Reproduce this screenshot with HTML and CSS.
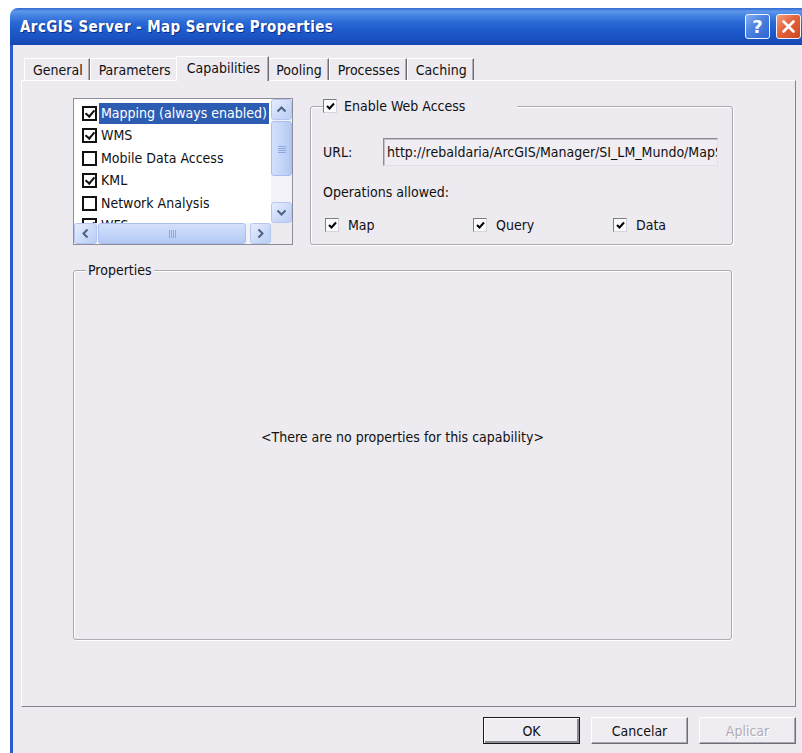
FILE: index.html
```html
<!DOCTYPE html>
<html lang="en">
<head>
<meta charset="utf-8">
<title>ArcGIS Server - Map Service Properties</title>
<link rel="stylesheet" href="styles.css">
</head>
<body>
<div class="window">
  <header class="titlebar">
    <span class="title">ArcGIS Server - Map Service Properties</span>
    <div class="caption-buttons">
      <button class="cap-btn help" type="button">?</button>
      <button class="cap-btn close" type="button">
        <svg width="23" height="23" viewBox="0 0 23 23"><path d="M6.5 6.5 L16.5 16.5 M16.5 6.5 L6.5 16.5" stroke="#fff" stroke-width="2.6" stroke-linecap="round" fill="none"/></svg>
      </button>
    </div>
  </header>

  <div class="client">
    <nav class="tabs">
      <div class="tab">General</div>
      <div class="tab">Parameters</div>
      <div class="tab active">Capabilities</div>
      <div class="tab">Pooling</div>
      <div class="tab">Processes</div>
      <div class="tab">Caching</div>
    </nav>

    <section class="panel">
      <div class="top-row">
        <div class="listbox">
          <ul class="items">
            <li class="item"><span class="cb checked"></span><span class="label selected">Mapping (always enabled)</span></li>
            <li class="item"><span class="cb checked"></span><span class="label">WMS</span></li>
            <li class="item"><span class="cb"></span><span class="label">Mobile Data Access</span></li>
            <li class="item"><span class="cb checked"></span><span class="label">KML</span></li>
            <li class="item"><span class="cb"></span><span class="label">Network Analysis</span></li>
            <li class="item"><span class="cb checked"></span><span class="label">WFS</span></li>
          </ul>
          <div class="vscroll">
            <span class="sb-btn">
              <svg width="11" height="7" viewBox="0 0 11 7"><path d="M1.5 5.5 L5.5 1.5 L9.5 5.5" stroke="#4D6185" stroke-width="2" fill="none"/></svg>
            </span>
            <span class="thumb v">
              <svg width="8" height="8" viewBox="0 0 8 8"><path d="M0 1.5H8M0 3.5H8M0 5.5H8M0 7.5H8" stroke="#8FAAE0" stroke-width="1"/></svg>
            </span>
            <span class="track"></span>
            <span class="sb-btn">
              <svg width="11" height="7" viewBox="0 0 11 7"><path d="M1.5 1.5 L5.5 5.5 L9.5 1.5" stroke="#4D6185" stroke-width="2" fill="none"/></svg>
            </span>
          </div>
          <div class="hscroll">
            <span class="sb-btn">
              <svg width="7" height="11" viewBox="0 0 7 11"><path d="M5.5 1.5 L1.5 5.5 L5.5 9.5" stroke="#4D6185" stroke-width="2" fill="none"/></svg>
            </span>
            <span class="thumb h">
              <svg width="8" height="8" viewBox="0 0 8 8"><path d="M1.5 0V8M3.5 0V8M5.5 0V8M7.5 0V8" stroke="#8FAAE0" stroke-width="1"/></svg>
            </span>
            <span class="track"></span>
            <span class="sb-btn">
              <svg width="7" height="11" viewBox="0 0 7 11"><path d="M1.5 1.5 L5.5 5.5 L1.5 9.5" stroke="#4D6185" stroke-width="2" fill="none"/></svg>
            </span>
          </div>
          <div class="corner"></div>
        </div>

        <fieldset class="group web">
          <legend class="caption web-caption">
            <span class="xcb"><svg width="11" height="11" viewBox="0 0 11 11"><path d="M2 5 L4.5 7.5 L9 2.5" stroke="#000" stroke-width="2" fill="none"/></svg></span>
            Enable Web Access
          </legend>
          <div class="url-row">
            <span class="url-label">URL:</span>
            <div class="url-box">http://rebaldaria/ArcGIS/Manager/SI_LM_Mundo/MapServer</div>
          </div>
          <div class="ops-label">Operations allowed:</div>
          <div class="ops">
            <label class="op"><span class="xcb"><svg width="11" height="11" viewBox="0 0 11 11"><path d="M2 5 L4.5 7.5 L9 2.5" stroke="#000" stroke-width="2" fill="none"/></svg></span>Map</label>
            <label class="op"><span class="xcb"><svg width="11" height="11" viewBox="0 0 11 11"><path d="M2 5 L4.5 7.5 L9 2.5" stroke="#000" stroke-width="2" fill="none"/></svg></span>Query</label>
            <label class="op"><span class="xcb"><svg width="11" height="11" viewBox="0 0 11 11"><path d="M2 5 L4.5 7.5 L9 2.5" stroke="#000" stroke-width="2" fill="none"/></svg></span>Data</label>
          </div>
        </fieldset>
      </div>

      <fieldset class="group props">
        <legend class="caption">Properties</legend>
        <p class="empty">&lt;There are no properties for this capability&gt;</p>
      </fieldset>
    </section>

    <div class="actions">
      <button class="btn default" type="button">OK</button>
      <button class="btn" type="button">Cancelar</button>
      <button class="btn" type="button" disabled>Aplicar</button>
    </div>
  </div>
</div>
</body>
</html>
```

FILE: styles.css
```css
* { box-sizing: border-box; }

html, body {
  margin: 0;
  padding: 0;
}

body {
  width: 802px;
  height: 753px;
  overflow: hidden;
  background: #fff;
  font-family: "DejaVu Sans Condensed", "DejaVu Sans", sans-serif;
  font-size: 14px;
  color: #111;
}

/* ---- window frame ---- */
.window {
  margin: 8px 0 0 10px;
  width: 800px;
  border-radius: 8px 8px 0 0;
  overflow: hidden;
}

.titlebar {
  height: 37px;
  display: flex;
  align-items: center;
  justify-content: space-between;
  padding: 0 9px 0 10px;
  background: linear-gradient(to bottom,
    #2f68d2 0%, #5f97ea 9%, #4584e2 20%, #2b6ad6 38%,
    #1f5bcb 60%, #1a52c2 82%, #1646b0 100%);
}

.title {
  color: #fff;
  font-weight: bold;
  font-size: 15px;
  letter-spacing: 0.4px;
  text-shadow: 1px 1px 0 #0f2f86;
}

.caption-buttons {
  display: flex;
  gap: 6px;
}

.cap-btn {
  width: 25px;
  height: 25px;
  padding: 0;
  border: 1px solid #f2f4fb;
  border-radius: 3px;
  display: grid;
  place-items: center;
  color: #fff;
}

.cap-btn.help {
  background: linear-gradient(135deg, #86aef0 0%, #4a82e0 45%, #2e63d0 100%);
  font-family: "DejaVu Sans", sans-serif;
  font-weight: bold;
  font-size: 18px;
  line-height: 1;
}

.cap-btn.close {
  background: linear-gradient(135deg, #f4a07c 0%, #e4623d 45%, #cd4520 100%);
}

.client {
  height: 708px;
  background: #edeaf0;
  border-left: 3px solid #2a5bd0;
  border-right: 3px solid #2a5bd0;
  padding: 11px 11px 0 8px;
}

/* ---- tabs ---- */
.tabs {
  display: flex;
  align-items: flex-end;
  height: 24px;
  margin-left: 3px;
}

.tab {
  height: 22px;
  display: flex;
  align-items: center;
  padding: 0 6px 0 8px;
  border-top: 1px solid #fff;
  border-left: 1px solid #fff;
  border-right: 1px solid #6f6d76;
  box-shadow: inset -1px 0 0 #aeacb4;
  white-space: nowrap;
}

.tab.active {
  position: relative;
  z-index: 1;
  height: 25px;
  margin: 0 -2px -1px -2px;
  padding: 0 8px 2px 10px;
  background: #edeaf0;
}

/* ---- tab page ---- */
.panel {
  height: 627px;
  border: 1px solid;
  border-color: #fff #84828a #84828a #fff;
  padding: 17px 0 0 51px;
}

.top-row {
  display: flex;
  gap: 17px;
  height: 147px;
}

/* list with check boxes */
.listbox {
  width: 220px;
  height: 147px;
  border: 1px solid #8e8d99;
  background: #fff;
  display: grid;
  grid-template-columns: 197px 21px;
  grid-template-rows: 124px 21px;
}

.items {
  list-style: none;
  margin: 0;
  padding: 3px 0 0 0;
  overflow: hidden;
}

.item {
  height: 22.5px;
  display: flex;
  align-items: center;
  padding-left: 8px;
  white-space: nowrap;
}

.cb {
  position: relative;
  flex: none;
  width: 15px;
  height: 15px;
  border: 2px solid #111;
  background: #fff;
  margin-right: 2px;
}

.cb.checked::after {
  content: "";
  position: absolute;
  left: 3px;
  top: 0;
  width: 4px;
  height: 7px;
  border: solid #111;
  border-width: 0 2px 2px 0;
  transform: rotate(40deg);
}

.label {
  padding: 0 2px;
  line-height: 21px;
}

.label.selected {
  background: #2d5db3;
  color: #fff;
}

/* scroll bars */
.vscroll {
  display: flex;
  flex-direction: column;
  background: #f3f2f8;
}

.hscroll {
  display: flex;
  background: #f3f2f8;
}

.sb-btn {
  flex: none;
  width: 21px;
  height: 21px;
  border: 1px solid #b4c6ef;
  border-radius: 3px;
  background: linear-gradient(135deg, #e6eefe 0%, #cfdcf9 50%, #b9cdf5 100%);
  display: grid;
  place-items: center;
}

.hscroll .sb-btn:first-child { width: 23px; }

.thumb {
  flex: none;
  border: 1px solid #a8bfee;
  border-radius: 3px;
  display: grid;
  place-items: center;
}

.thumb.v {
  height: 55px;
  margin-top: 1px;
  background: linear-gradient(to right, #d3e0fc, #c1d3f8 60%, #b3c8f4);
}

.thumb.h {
  width: 148px;
  margin-left: 1px;
  background: linear-gradient(to bottom, #d3e0fc, #c1d3f8 60%, #b3c8f4);
}

.track { flex: 1; }

.corner { background: #edeaf0; }

/* group boxes */
.group {
  margin: 0;
  min-width: 0;
  border: 1px solid #aba9b1;
  border-radius: 3px;
  box-shadow: inset 1px 1px 0 #fff, 1px 1px 0 #fff;
}

.caption {
  background: #edeaf0;
  line-height: 16px;
  padding: 0 2px;
}

.web {
  width: 423px;
  height: 147px;
  padding: 24px 12px 0 12px;
}

.web-caption {
  display: flex;
  align-items: center;
  gap: 7px;
  padding: 0 52px 0 0;
}

.xcb {
  flex: none;
  width: 14px;
  height: 14px;
  border: 1px solid;
  border-color: #7d7c84 #d6d4da #d6d4da #7d7c84;
  background: #fbfbfd;
  display: grid;
  place-items: center;
}

.url-row {
  display: flex;
  align-items: center;
}

.url-label { width: 60px; }

.url-box {
  width: 335px;
  height: 28px;
  line-height: 26px;
  padding: 0 3px;
  border: 1px solid;
  border-color: #8c8a92 #e2e0e6 #e2e0e6 #8c8a92;
  box-shadow: inset 1px 1px 0 #c4c2c9;
  background: #f0eef3;
  white-space: nowrap;
  overflow: hidden;
}

.ops-label {
  margin-top: 18px;
  line-height: 16px;
}

.ops {
  margin-top: 17px;
  padding-left: 2px;
  display: grid;
  grid-template-columns: 148px 140px auto;
}

.op {
  display: flex;
  align-items: center;
  gap: 9px;
  line-height: 16px;
}

.props {
  margin-top: 17px;
  width: 659px;
  height: 378px;
  padding: 0 12px;
}

.empty {
  margin: 151px 0 0;
  line-height: 16px;
  text-align: center;
}

/* ---- dialog buttons ---- */
.actions {
  display: flex;
  justify-content: flex-end;
  gap: 11px;
  margin-top: 10px;
}

.btn {
  width: 97px;
  height: 27px;
  padding: 0;
  font: inherit;
  color: #111;
  background: #efedf2;
  border: 1px solid;
  border-color: #fff #6e6c74 #6e6c74 #fff;
  box-shadow: inset -1px -1px 0 #aaa8b0;
}

.btn.default {
  border: 1px solid #1a1a1c;
  box-shadow: inset 1px 1px 0 #fff, inset -2px -2px 0 #8c8a92;
}

.btn:disabled {
  color: #aeacb3;
  text-shadow: 1px 1px 0 #fff;
}
```
